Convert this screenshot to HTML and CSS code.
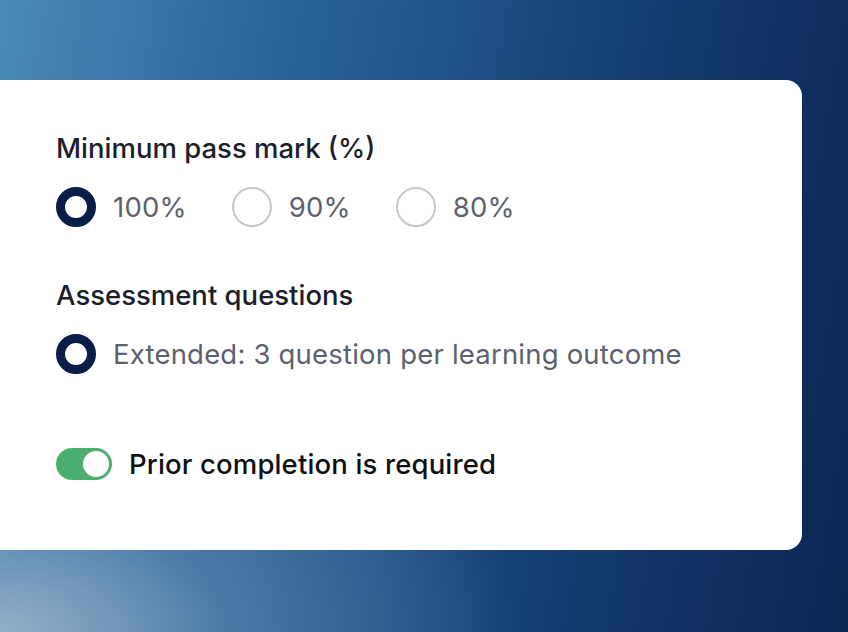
FILE: index.html
```html
<!DOCTYPE html>
<html lang="en">
<head>
<meta charset="utf-8">
<title>Settings</title>
<link rel="stylesheet" href="styles.css">
</head>
<body>
<div class="card">
  <div class="field">
    <div class="field-title">Minimum pass mark (%)</div>
    <div class="options">
      <label class="option"><span class="radio selected"></span><span class="opt-label">100%</span></label>
      <label class="option"><span class="radio"></span><span class="opt-label">90%</span></label>
      <label class="option"><span class="radio"></span><span class="opt-label">80%</span></label>
    </div>
  </div>
  <div class="field">
    <div class="field-title">Assessment questions</div>
    <div class="options">
      <label class="option"><span class="radio selected"></span><span class="opt-label">Extended: 3 question per learning outcome</span></label>
    </div>
  </div>
  <div class="toggle-row">
    <span class="toggle"><span class="knob"></span></span>
    <span class="toggle-label">Prior completion is required</span>
  </div>
</div>
</body>
</html>
```
FILE: styles.css
```css
html, body {
  margin: 0;
  padding: 0;
  width: 848px;
  height: 632px;
  overflow: hidden;
}
body {
  font-family: Inter, "Liberation Sans", sans-serif;
  background:
    radial-gradient(ellipse 520px 260px at 0% 100%, rgba(150, 178, 202, 0.95) 0%, rgba(110, 145, 180, 0.5) 45%, rgba(60, 100, 150, 0) 100%),
    linear-gradient(100deg, #4b89b7 0%, #2a6398 30%, #1f5287 48%, #143b6e 70%, #0b2552 100%);
}
.card {
  margin-top: 80px;
  width: 802px;
  height: 470px;
  box-sizing: border-box;
  background: #ffffff;
  border-radius: 0 16px 16px 0;
  padding: 51px 0 0 56px;
  display: flex;
  flex-direction: column;
}
.field {
  display: flex;
  flex-direction: column;
  gap: 22px;
}
.field + .field {
  margin-top: 51px;
}
.field-title,
.opt-label,
.toggle-label {
  font-size: 27.5px;
  line-height: 34px;
}
.field-title {
  color: #1b1e2b;
  font-weight: 500;
}
.options {
  display: flex;
  align-items: center;
  gap: 45px;
}
.option {
  display: flex;
  align-items: center;
  gap: 17px;
}
.radio {
  width: 40px;
  height: 40px;
  box-sizing: border-box;
  border-radius: 50%;
  border: 2px solid #c6c8cd;
  background: #fff;
  flex: none;
}
.radio.selected {
  border: 9px solid #0a1c48;
}
.opt-label {
  color: #5c616d;
  letter-spacing: 0.2px;
}
.toggle-row {
  margin-top: 73px;
  display: flex;
  align-items: center;
  gap: 17px;
}
.toggle {
  width: 56px;
  height: 32px;
  border-radius: 16px;
  background: #4caf6f;
  display: flex;
  align-items: center;
  justify-content: flex-end;
  padding: 0 3px;
  box-sizing: border-box;
  flex: none;
}
.knob {
  width: 26px;
  height: 26px;
  border-radius: 50%;
  background: #fff;
}
.toggle-label {
  color: #0e0f12;
  font-weight: 500;
  letter-spacing: 0.15px;
}
```
